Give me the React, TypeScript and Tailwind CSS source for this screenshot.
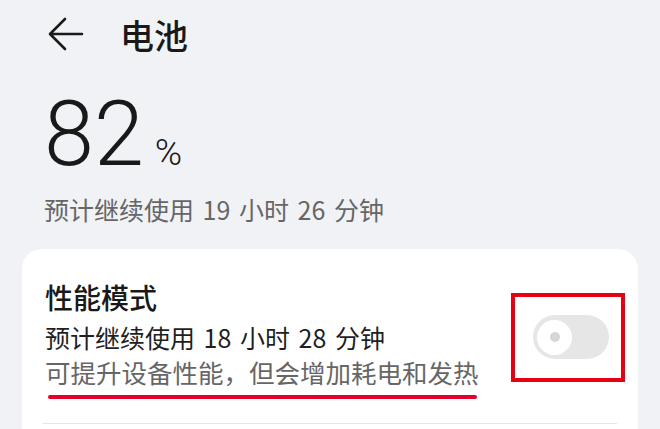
import React from "react";

const cjk = { fontFamily: '"Noto Sans CJK SC", "Noto Sans", sans-serif' };

export default function App() {
  return (
    <div
      className="w-[660px] h-[429px] overflow-hidden bg-[#f1f2f6]"
      style={cjk}
    >
      {/* header */}
      <div className="h-[70px] flex items-center pl-[48px]">
        <svg width="36" height="34" viewBox="0 0 36 34" fill="none" className="mt-[-2px]">
          <path
            d="M34 17H3M17 2L2 17L17 32"
            stroke="#1a1a1a"
            strokeWidth="2.6"
            strokeLinecap="round"
            strokeLinejoin="round"
          />
        </svg>
        <div className="ml-[36px] text-[34px] leading-none font-medium text-[#191919]">电池</div>
      </div>

      {/* big percent */}
      <div className="mt-[20px] pl-[44px] flex items-baseline leading-none text-[#191919]">
        <span className="text-[90px] font-light" style={{ fontFamily: "Roboto, Inter, sans-serif" }}>
          82
        </span>
        <span className="ml-[11px] text-[37px] font-light" style={{ fontFamily: "Roboto, Inter, sans-serif" }}>
          %
        </span>
      </div>

      <div className="mt-[17px] pl-[44px] text-[25px] leading-none text-[#666666] [word-spacing:3px]">
        预计继续使用 19 小时 26 分钟
      </div>

      {/* card */}
      <div className="mt-[27px] mx-[22px] bg-white rounded-t-[20px] px-[21px] pt-[34px] h-[200px]">
        <div className="flex justify-between pl-[2px] pr-[8px]">
          <div className="flex flex-col">
            <div className="text-[28px] leading-none font-medium text-[#191919]">性能模式</div>
            <div className="mt-[14px] text-[25px] leading-none text-[#1f1f1f] [word-spacing:3px]">
              预计继续使用 18 小时 28 分钟
            </div>
            <div className="mt-[9px] text-[25.5px] leading-none text-[#666666]">
              可提升设备性能，但会增加耗电和发热
            </div>
            <div className="mt-[10px] ml-[3px] w-[429px] h-[4px] rounded-full bg-[#e4002b]" />
          </div>
          <div className="relative mt-[32px] w-[76px] h-[44px] self-start">
            <div className="w-full h-full rounded-full bg-[#e6e6e6] flex items-center pl-[4px]">
              <div className="w-[35px] h-[35px] rounded-full bg-white flex items-center justify-center">
                <div className="w-[10px] h-[10px] rounded-full bg-[#d6d6d6]" />
              </div>
            </div>
            <div className="absolute -left-[22px] -right-[16px] -top-[22px] -bottom-[23px] border-[4px] border-[#e60012]" />
          </div>
        </div>
        <div className="mt-[24px] h-px bg-[#e6e6e6]" />
      </div>
    </div>
  );
}
